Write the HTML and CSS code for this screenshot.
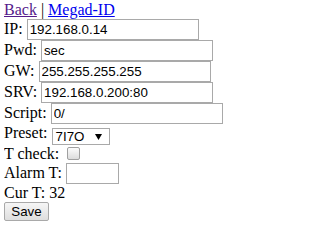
FILE: index.html
```html
<!DOCTYPE html>
<html>
<head>
<meta charset="utf-8">
<link rel="stylesheet" href="styles.css">
</head>
<body>
<div class="nav"><a href="#" class="visited">Back</a> | <a href="#">Megad-ID</a></div>
<div class="row">IP: <input class="field" type="text" value="192.168.0.14"></div>
<div class="row">Pwd: <input class="field" type="text" value="sec"></div>
<div class="row">GW: <input class="field" type="text" value="255.255.255.255"></div>
<div class="row">SRV: <input class="field" type="text" value="192.168.0.200:80"></div>
<div class="row">Script: <input class="field" type="text" value="0/"></div>
<div class="row">Preset: <span class="select"><span class="sel-val">7I7O</span><svg class="sel-arrow" width="7" height="6" viewBox="0 0 7 6"><polygon points="0,0 7,0 3.5,6" fill="#000"/></svg></span></div>
<div class="row">T check: <span class="check"></span></div>
<div class="row">Alarm T: <input class="field small" type="text" value=""></div>
<div class="row">Cur T: 32</div>
<div class="row"><button class="btn" type="button">Save</button></div>
</body>
</html>
```
FILE: styles.css
```css
body {
  margin: 1px 4px;
  font-family: "Liberation Serif", "Times New Roman", serif;
  font-size: 16px;
  color: #000;
  background: #fff;
}
a { color: #0000ee; text-decoration: underline; }
a.visited { color: #551a8b; }
.row { white-space: nowrap; }
.field {
  box-sizing: border-box;
  width: 172px;
  height: 21px;
  margin: 0;
  padding: 1px 2px;
  border: 1px solid #a9a9a9;
  font-family: "Liberation Sans", Arial, sans-serif;
  font-size: 13.33px;
  color: #000;
  background: #fff;
}
.field.small { width: 53px; }
.select {
  display: inline-flex;
  align-items: center;
  justify-content: space-between;
  box-sizing: border-box;
  width: 58px;
  height: 17px;
  padding: 0 7px 0 3px;
  border: 1px solid #a9a9a9;
  font-family: "Liberation Sans", Arial, sans-serif;
  font-size: 13.33px;
  line-height: 15px;
  vertical-align: -3px;
  background: #fff;
}
.sel-arrow { display: block; }
.check {
  display: inline-block;
  box-sizing: border-box;
  width: 13px;
  height: 13px;
  margin: 0 3px 0 4px;
  border: 1px solid #a0a0a0;
  border-radius: 2px;
  background: linear-gradient(#fcfcfc, #dcdcdc);
  vertical-align: -1px;
}
.btn {
  box-sizing: border-box;
  width: 45px;
  height: 19px;
  margin: 0;
  padding: 0;
  border: 1px solid #a9a9a9;
  border-radius: 2px;
  background: linear-gradient(#f6f6f6, #dedede);
  font-family: "Liberation Sans", Arial, sans-serif;
  font-size: 13.33px;
  color: #000;
}
```
